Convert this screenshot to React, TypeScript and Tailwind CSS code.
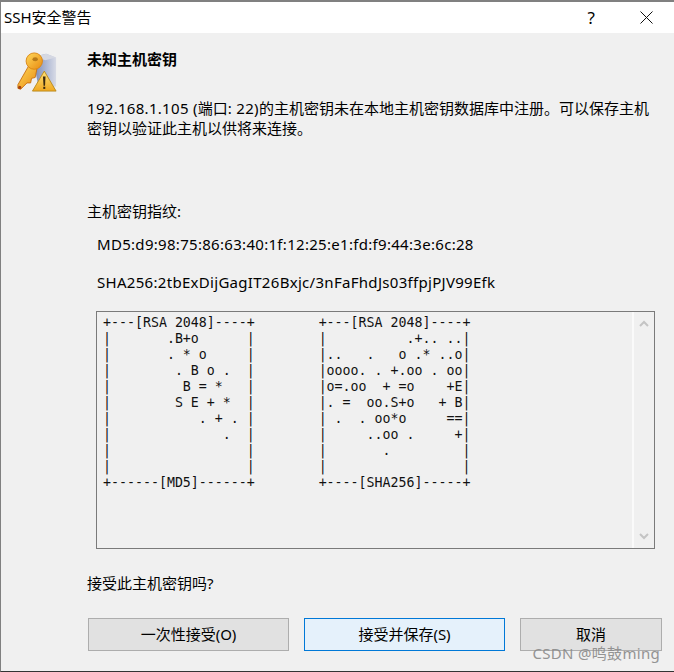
const FONT = "font-['Noto_Sans','Noto_Sans_CJK_SC',sans-serif]";

const fingerprintArt = `+---[RSA 2048]----+        +---[RSA 2048]----+
|       .B+o      |        |          .+.. ..|
|       . * o     |        |..   .   o .* ..o|
|        . B o .  |        |oooo. . +.oo . oo|
|         B = *   |        |o=.oo  + =o    +E|
|        S E + *  |        |. =  oo.S+o   + B|
|           . + . |        | .  . oo*o     ==|
|              .  |        |     ..oo .     +|
|                 |        |       .         |
|                 |        |                 |
+------[MD5]------+        +----[SHA256]-----+`;

const KeyWarningIcon = () => (
  <svg width="40" height="40" viewBox="0 0 44 44" className="mt-[4px] shrink-0">
    <defs>
      <linearGradient id="box" x1="0" y1="0" x2="1" y2="0">
        <stop offset="0" stopColor="#7f8fb8" />
        <stop offset="0.6" stopColor="#b4bdd6" />
        <stop offset="1" stopColor="#d8dbe6" />
      </linearGradient>
      <linearGradient id="key" x1="0" y1="0" x2="1" y2="1">
        <stop offset="0" stopColor="#ffd85a" />
        <stop offset="1" stopColor="#e88a10" />
      </linearGradient>
      <linearGradient id="warn" x1="0" y1="0" x2="0" y2="1">
        <stop offset="0" stopColor="#ffe27a" />
        <stop offset="1" stopColor="#f0a820" />
      </linearGradient>
    </defs>
    <path d="M20 5 L32 2 L43 6 L43 38 L24 40 L20 20 Z" fill="url(#box)" />
    <path d="M32 2 L43 6 L31 9 L20 5 Z" fill="#d5d8e2" />
    <g>
      <path
        d="M13 15 L1 36 L1 40 L4 41 L11 34 L15 34 L16 29 L20 28 L22 18 Z"
        fill="url(#key)"
        stroke="#c86f10"
        strokeWidth="1"
        strokeLinejoin="round"
      />
      <circle cx="19" cy="10" r="9" fill="url(#key)" stroke="#d98512" strokeWidth="1" />
      <ellipse cx="20" cy="8" rx="3" ry="2.2" fill="#b87a18" />
      <circle cx="3" cy="39" r="1.8" fill="#a8400c" />
    </g>
    <path
      d="M30 21 L43 43 L17 43 Z"
      fill="url(#warn)"
      stroke="#b8891c"
      strokeWidth="1"
      strokeLinejoin="round"
    />
    <path d="M28.6 27 H31.4 L30.8 37 H29.2 Z" fill="#3a2a10" />
    <rect x="28.9" y="38.2" width="2.2" height="2.4" fill="#3a2a10" />
  </svg>
);

const ChevronUp = () => (
  <svg width="10" height="7" viewBox="0 0 10 7">
    <path d="M1 6 L5 2 L9 6" fill="none" stroke="#c4c4c4" strokeWidth="2" />
  </svg>
);

const ChevronDown = () => (
  <svg width="10" height="7" viewBox="0 0 10 7">
    <path d="M1 1 L5 5 L9 1" fill="none" stroke="#c4c4c4" strokeWidth="2" />
  </svg>
);

export default function App() {
  return (
    <div
      className={`relative flex h-[672px] w-[674px] flex-col overflow-hidden border-t-2 border-l border-b border-t-[#808080] border-l-[#808080] border-b-[#333333] bg-[#f0f0f0] text-[15px] text-black ${FONT}`}
    >
      <div className="flex h-[31px] shrink-0 items-center justify-between bg-white pl-[3px]">
        <span>SSH安全警告</span>
        <div className="flex items-center">
          <span className="mr-[45px] text-[17px]">?</span>
          <svg width="13" height="13" viewBox="0 0 13 13" className="mr-[21px]">
            <path d="M0.5 0.5 L12.5 12.5 M12.5 0.5 L0.5 12.5" stroke="#111111" strokeWidth="1" />
          </svg>
        </div>
      </div>

      <div className="flex pl-[16px] pt-[15px]">
        <KeyWarningIcon />
        <div className="ml-[30px] flex-1">
          <div className="flex h-[22px] items-center font-bold">未知主机密钥</div>
          <div className="mt-[28px] w-[566px] leading-[20px]">
            <span className="tracking-[0.3px]">192.168.1.105 (</span>端口<span className="tracking-[0.3px]">: 22)</span>的主机密钥未在本地主机密钥数据库中注册。可以保存主机密钥以验证此主机以供将来连接。
          </div>
        </div>
      </div>

      <div className="ml-[86px] mt-[63px] h-[20px] leading-[20px]">主机密钥指纹:</div>
      <div className="ml-[96px] mt-[13px] h-[20px] leading-[20px] tracking-[0.3px]">
        MD5:d9:98:75:86:63:40:1f:12:25:e1:fd:f9:44:3e:6c:28
      </div>
      <div className="ml-[96px] mt-[18px] h-[20px] leading-[20px] tracking-[0.3px]">
        SHA256:2tbExDijGagIT26Bxjc/3nFaFhdJs03ffpjPJV99Efk
      </div>

      <div className="ml-[95px] mt-[19px] flex h-[238px] w-[559px] shrink-0 border border-[#7a7a7a]">
        <pre className="flex-1 pl-[6px] pt-[3px] font-['DejaVu_Sans_Mono',monospace] text-[13.28px] leading-[16px] text-[#111111]">
          {fingerprintArt}
        </pre>
        <div className="flex w-[22px] flex-col items-center justify-between border-l-2 border-l-[#fafafa] py-[8px]">
          <ChevronUp />
          <ChevronDown />
        </div>
      </div>

      <div className="ml-[86px] mt-[24px] h-[20px] leading-[20px]">接受此主机密钥吗?</div>

      <div className="ml-[87px] mt-[25px] flex gap-[15px]">
        <button className="h-[33px] w-[201px] border border-[#adadad] bg-[#e1e1e1]">一次性接受(O)</button>
        <button className="h-[33px] w-[201px] border border-[#0078d7] bg-[#e5f1fb]">接受并保存(S)</button>
        <button className="h-[33px] w-[142px] border border-[#adadad] bg-[#e1e1e1]">取消</button>
      </div>

      <span className="absolute bottom-[7px] right-[14px] text-[15px] tracking-[0.3px] text-[#8a8a8a] opacity-90">CSDN @鸣鼓ming</span>
    </div>
  );
}
